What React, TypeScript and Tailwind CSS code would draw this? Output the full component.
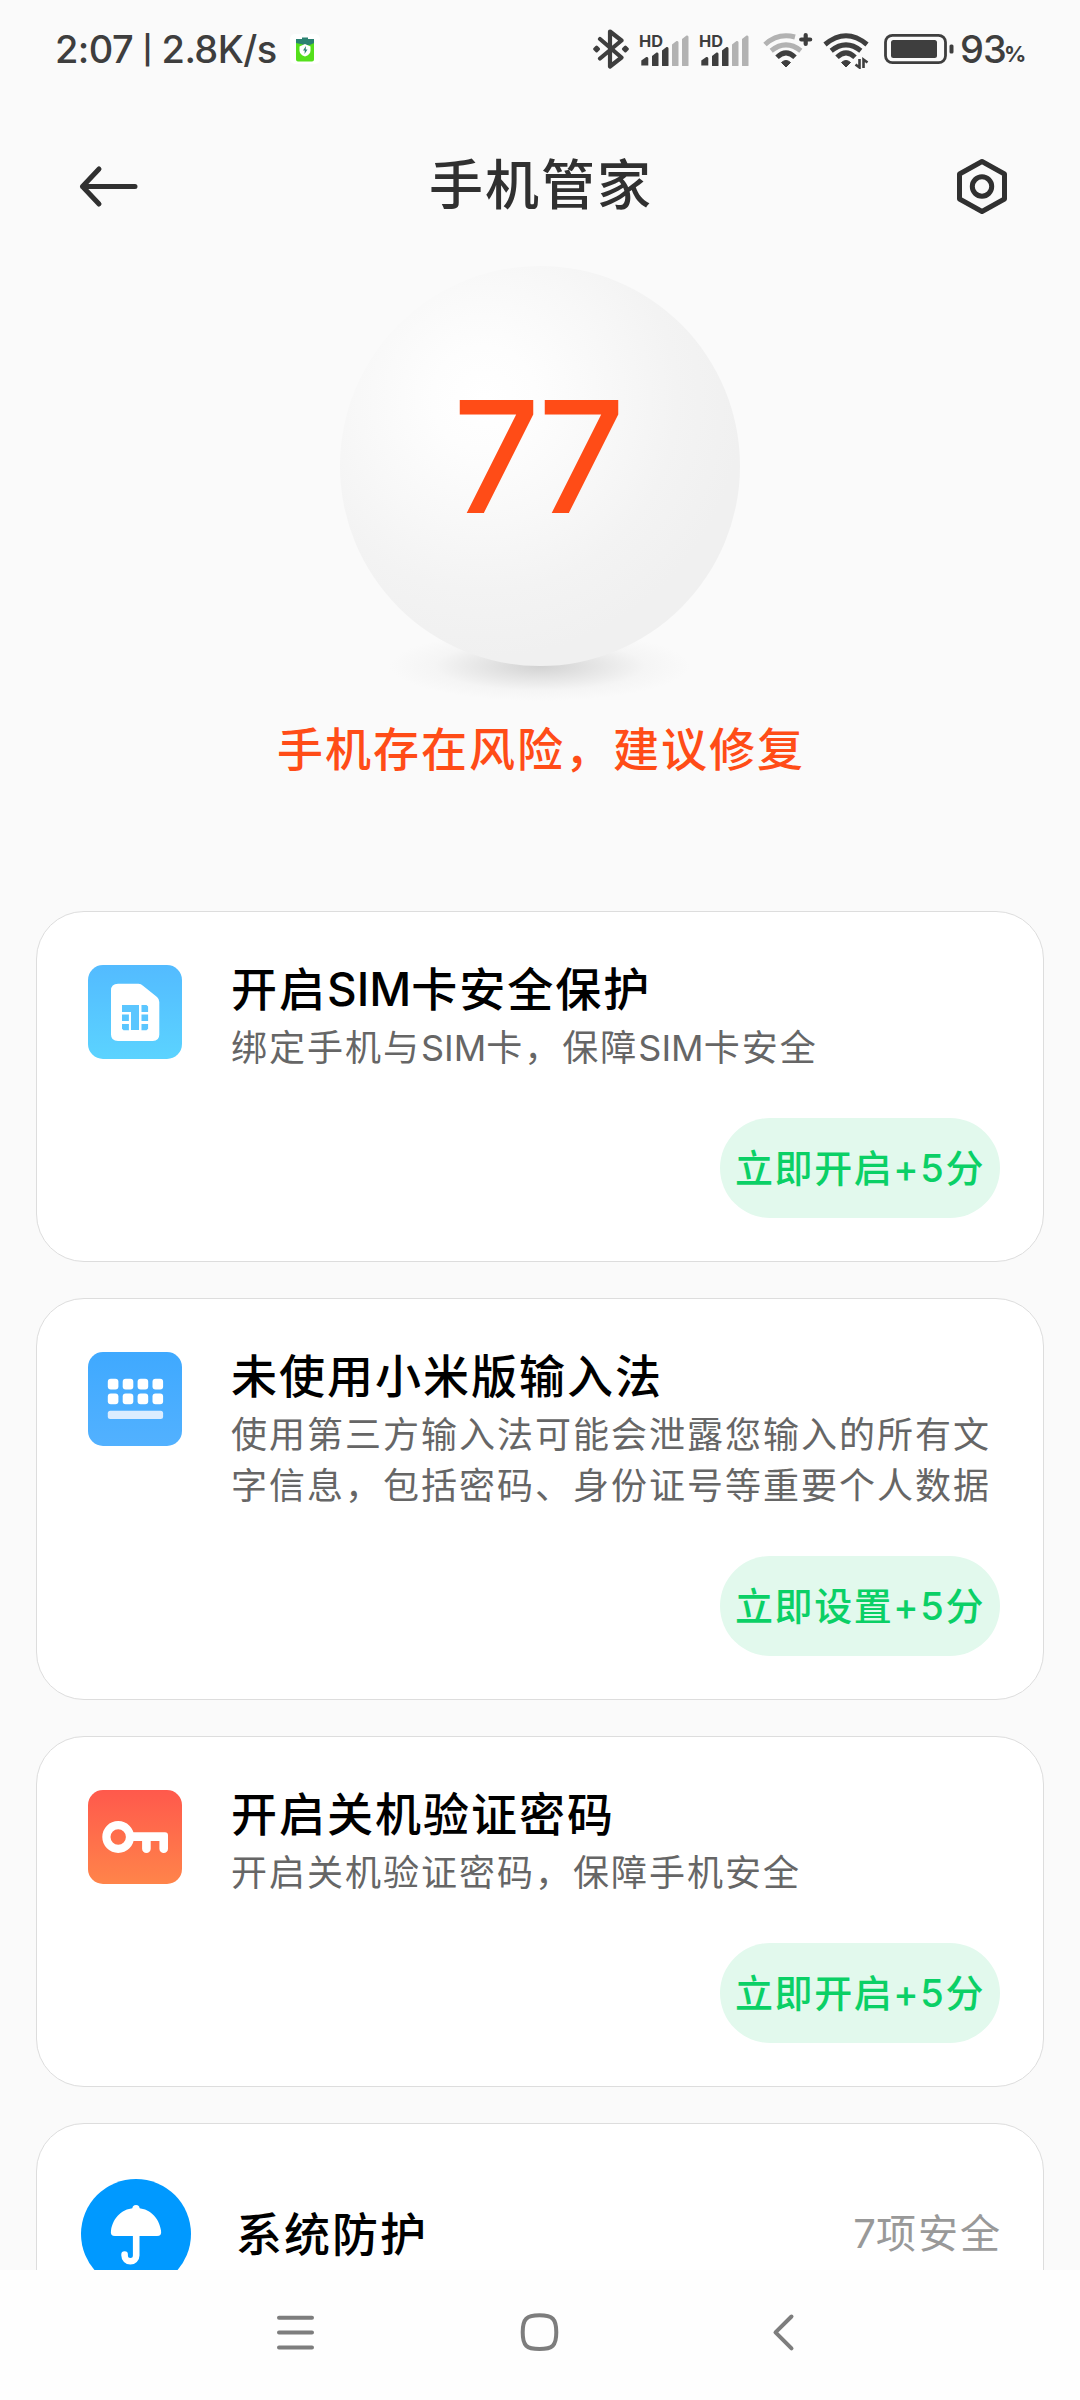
import type { ReactNode } from "react";

type Risk = {
  title: string;
  desc: string;
  action: string;
  icon: ReactNode;
};

// Latin runs and digits sit tighter than the Chinese glyphs around them
function Mixed({ text }: { text: string }) {
  return text.split(/([A-Z0-9]+)/).map((part, i) =>
    i % 2 ? (
      <span key={i} className="tracking-normal">
        {part}
      </span>
    ) : (
      part
    )
  );
}

function SimIcon() {
  return (
    <svg viewBox="0 0 94 94" className="h-[94px] w-[94px] shrink-0">
      <defs>
        <linearGradient id="sim" x1="0" y1="0" x2="0" y2="1">
          <stop offset="0" stopColor="#53bbff" />
          <stop offset="1" stopColor="#5bd3ff" />
        </linearGradient>
      </defs>
      <rect width="94" height="94" rx="15" fill="url(#sim)" />
      <path d="M30 18.7h20.5q2.5 0 4.500 2L69 32q2.300 2 2.300 5v32.500q0 6.500-6.500 6.500H30q-7 0-7-6.500V25.500q0-6.800 7-6.800z" fill="#fff" />
      <g fill="#5bc6ff">
        <path d="M34 40h17v25h-8V47h-9z" />
        <rect x="34" y="49.5" width="7" height="6.5" />
        <path d="M34 59h7v6.200h-5.500l-1.500-1.500z" />
        <path d="M53.500 40h5l1.600 1.500V47h-6.600z" />
        <rect x="53.5" y="49.5" width="6.6" height="6.5" />
        <path d="M53.500 59h6.600v4.700l-1.600 1.500h-5z" />
      </g>
      <path d="M41.900 47.500V65" stroke="#fff" strokeWidth="2" />
    </svg>
  );
}

function KeyboardIcon() {
  return (
    <svg viewBox="0 0 94 94" className="h-[94px] w-[94px] shrink-0">
      <defs>
        <linearGradient id="kbd" x1="0" y1="0" x2="0" y2="1">
          <stop offset="0" stopColor="#3fa9ff" />
          <stop offset="1" stopColor="#52b1ff" />
        </linearGradient>
      </defs>
      <rect width="94" height="94" rx="15" fill="url(#kbd)" />
      {[26.7, 41.5].map((y) =>
        [19.8, 34.7, 49.6, 64.5].map((x) => (
          <rect key={`${x}-${y}`} x={x} y={y} width="10.6" height="10.8" rx="3" fill="#fff" />
        ))
      )}
      <rect x="19.8" y="58.7" width="55.3" height="8.3" rx="2.5" fill="#dcedff" />
    </svg>
  );
}

function KeyIcon() {
  return (
    <svg viewBox="0 0 94 94" className="h-[94px] w-[94px] shrink-0">
      <defs>
        <linearGradient id="key" x1="0" y1="0" x2="0" y2="1">
          <stop offset="0" stopColor="#ff594c" />
          <stop offset="1" stopColor="#ff844a" />
        </linearGradient>
      </defs>
      <rect width="94" height="94" rx="15" fill="url(#key)" />
      <circle cx="30.2" cy="47" r="11.8" fill="none" stroke="#fff" strokeWidth="8.2" />
      <path d="M43 42.300h34q3 0 3 3v13.500a4.300 4.300 0 0 1-8.600 0V51h-8.700v7.800a4.300 4.300 0 0 1-8.600 0V51H43z" fill="#fff" />
    </svg>
  );
}

function UmbrellaIcon() {
  return (
    <svg viewBox="0 0 110 110" className="h-[110px] w-[110px] shrink-0">
      <circle cx="55" cy="55" r="55" fill="#0099ff" />
      <circle cx="55" cy="29.5" r="3.6" fill="#fff" />
      <path d="M34 57q-5 0-4-5.500C32 38 42 29 55 29s23 9 25 22.500q1 5.500-4 5.500z" fill="#fff" />
      <path d="M55.200 56v20.500a5.700 5.700 0 0 1-11.600 0v-1" fill="none" stroke="#fff" strokeWidth="6.6" strokeLinecap="round" />
    </svg>
  );
}

function Signal() {
  return (
    <svg viewBox="0 0 52 40" className="h-[40px] w-[52px]">
      <text x="0" y="17.5" fontSize="16" fontWeight="700" fill="#3e3e3e" textLength="24" lengthAdjust="spacingAndGlyphs">HD</text>
      <g fill="#3e3e3e">
        <path d="M2.300 31.500l5-3.500q2-.5 2 1.500v7h-7z" />
        <path d="M13 27l4.500-3.500q2-.5 2 1.500v11.500q0 .5-.5.500H13.500q-.5 0-.5-.5z" />
        <path d="M23 21.500l4.500-3.500q2-.5 2 1.500v17q0 .5-.5.500H23.500q-.5 0-.5-.5z" />
      </g>
      <g fill="#b2b2b2">
        <path d="M33 15.500l4.500-3.500q2-.5 2 1.500v23q0 .5-.5.500H33.500q-.5 0-.5-.5z" />
        <path d="M43 10l4.500-3.500q2-.5 2 1.500v28.500q0 .5-.5.500H43.500q-.5 0-.5-.5z" />
      </g>
    </svg>
  );
}

function Wifi({ outer, plus }: { outer: string; plus?: boolean }) {
  return (
    <svg viewBox="0 0 50 40" className="h-[40px] w-[50px]" fill="none" strokeWidth="5">
      <path d={plus ? "M2 15.500Q15 3.500 32 8" : "M2 15.500Q23 -2 44 15.500"} stroke={outer} />
      <path d="M8.200 21.700Q23 10 37.800 21.700" stroke={outer} />
      <path d="M14 28.200Q23 19.500 32 28.200" stroke="#3e3e3e" />
      <path d="M18.500 33.500q4.500-4 9 0L23 38z" fill="#3e3e3e" stroke="#3e3e3e" strokeWidth="1" strokeLinejoin="round" />
      {plus ? (
        <path d="M42.700 6v9M38.200 10.500h9" stroke="#3e3e3e" strokeWidth="4.2" strokeLinecap="round" />
      ) : (
        <path d="M36.500 30v8.500l-4-3M40.500 39v-8.500l4 3" stroke="#3e3e3e" strokeWidth="2.6" />
      )}
    </svg>
  );
}

function StatusBar() {
  return (
    <div className="flex h-[98px] items-center justify-between px-[55px] text-[#3e3e3e]">
      <div className="flex items-center">
        <span className="w-[235px] text-[38px] font-medium tracking-[-0.6px] whitespace-nowrap">
          2:07 <span className="align-[3px] text-[28px] font-semibold">|</span> 2.8K/s
        </span>
        <svg viewBox="0 0 30 30" className="h-[30px] w-[30px]">
          <rect width="30" height="30" rx="5" fill="#fff" />
          <path d="M6 5h6V3.500h6V5h6v8H6z" fill="#2b8272" />
          <path d="M6 9q5 1 9 2t9-2v16.500q0 2-2 2H8q-2 0-2-2z" fill="#55e01c" />
          <path d="M15 10l5.500 2.500v4q0 4-5.500 6-5.500-2-5.500-6v-4z" fill="#fff" />
          <path d="M16 12l-3 4.500h1.800L14.500 20l3-4.500h-1.800z" fill="#2b8272" />
        </svg>
      </div>
      <div className="flex items-center">
        <svg viewBox="0 0 38 40" className="mr-[9px] h-[40px] w-[38px]" fill="none" stroke="#3e3e3e" strokeWidth="4.2" strokeLinejoin="round" strokeLinecap="round">
          <path d="M8 10l21.500 18.500L18 37.500V2.500L29.500 11.500 8 29.500" />
          <path d="M4.600 18l2 2-2 2-2-2zM33.400 18l2 2-2 2-2-2z" fill="#3e3e3e" strokeWidth="3" />
        </svg>
        <div className="mr-2">
          <Signal />
        </div>
        <div className="mr-[12px]">
          <Signal />
        </div>
        <div className="mr-[10px]">
          <Wifi outer="#b2b2b2" plus />
        </div>
        <div className="mr-[11px]">
          <Wifi outer="#3e3e3e" />
        </div>
        <svg viewBox="0 0 70 32" className="h-[32px] w-[70px]">
          <rect x="1.5" y="2.3" width="60" height="27.4" rx="7" fill="none" stroke="#3e3e3e" strokeWidth="2.8" />
          <rect x="7" y="7" width="46" height="18" rx="2.5" fill="#3e3e3e" />
          <rect x="65.5" y="11.5" width="4" height="9" rx="1.5" fill="#3e3e3e" />
        </svg>
        <span className="ml-[6px] w-[44px] text-[38px] font-medium tracking-[-1px]">93</span>
        <span className="mt-[10px] w-[21px] text-[22px] font-bold">%</span>
      </div>
    </div>
  );
}

function RiskCard({ title, desc, action, icon }: Risk) {
  return (
    <section className="rounded-[48px] border border-[#dddddd] bg-white pt-[53px] pr-[43px] pb-[43px] pl-[51px]">
      <div className="flex gap-[49px]">
        {icon}
        <div className="-mt-1.5">
          <h2 className="text-[46px] leading-[60px] font-medium tracking-[2px] whitespace-nowrap text-black">
            <Mixed text={title} />
          </h2>
          <p className="mt-1 w-[780px] text-[36px] leading-[51px] tracking-[2px] text-[#666666]">
            <Mixed text={desc} />
          </p>
        </div>
      </div>
      <div className="mt-11 flex justify-end">
        <button className="h-[100px] w-[280px] rounded-full bg-[#e2f9ed] text-[38px] font-medium tracking-[1.6px] whitespace-nowrap text-[#0bd066]">
          {action}
        </button>
      </div>
    </section>
  );
}

const risks: Risk[] = [
  { title: "开启SIM卡安全保护", desc: "绑定手机与SIM卡，保障SIM卡安全", action: "立即开启+5分", icon: <SimIcon /> },
  {
    title: "未使用小米版输入法",
    desc: "使用第三方输入法可能会泄露您输入的所有文字信息，包括密码、身份证号等重要个人数据",
    action: "立即设置+5分",
    icon: <KeyboardIcon />,
  },
  { title: "开启关机验证密码", desc: "开启关机验证密码，保障手机安全", action: "立即开启+5分", icon: <KeyIcon /> },
];

export default function App() {
  return (
    <div lang="zh-CN" className="flex h-[2400px] w-[1080px] flex-col overflow-hidden bg-[#fafafa] font-['Inter','Noto_Sans_CJK_SC',sans-serif]">
      <StatusBar />

      <header className="flex h-[168px] items-start justify-between px-[72px] pt-[47px]">
        <svg viewBox="0 0 80 80" className="h-[80px] w-[80px]" fill="none" stroke="#303030" strokeWidth="5" strokeLinecap="round" strokeLinejoin="round">
          <path d="M27 24L10.500 41.500 27 59M10.500 41.500H63" />
        </svg>
        <h1 className="pl-[2px] text-[54px] leading-[82px] font-medium tracking-[2px] text-[#303030]">手机管家</h1>
        <svg viewBox="0 0 80 80" className="h-[80px] w-[80px]" fill="none" stroke="#303030" strokeWidth="5" strokeLinejoin="round">
          <path d="M54 16.500L76.500 29v25L54 66.500 31.500 54V29z" />
          <circle cx="54" cy="41.5" r="9.7" />
        </svg>
      </header>

      <div className="flex flex-col items-center">
        <div className="relative flex h-[400px] w-[400px] justify-center">
          <div className="absolute top-[365px] left-[50px] h-[70px] w-[300px] bg-[radial-gradient(closest-side,#d2d2d2,#e4e4e4_35%,#f5f5f5_70%,#fafafa)]" />
          <div className="relative flex h-[400px] w-[400px] justify-center rounded-full bg-[radial-gradient(circle_at_36%_33%,#ffffff_0%,#fdfdfd_14%,#f8f8f8_34%,#f3f3f3_52%,#f0f0f0_70%,#f0f0f0_100%)]">
            <span className="mt-[111px] -ml-[6px] text-[152px] leading-[160px] font-normal tracking-[-4px] text-[#ff4c17] [-webkit-text-stroke:2px_#ff4c17]">77</span>
          </div>
        </div>
        <p className="mt-[48px] pl-[2px] text-[46px] leading-[70px] font-medium tracking-[2px] text-[#ff4c17]">手机存在风险，建议修复</p>
      </div>

      <main className="mt-[127px] flex h-[1359px] shrink-0 flex-col gap-9 overflow-hidden px-9">
        {risks.map((risk) => (
          <RiskCard key={risk.title} {...risk} />
        ))}
        <section className="flex h-[222px] shrink-0 items-center rounded-[48px] border border-[#dddddd] bg-white pr-[41px] pl-11">
          <UmbrellaIcon />
          <h2 className="ml-[45px] flex-1 text-[46px] font-medium tracking-[2px] text-black">系统防护</h2>
          <span className="text-[40px] tracking-[2px] text-[#999999]">
            <Mixed text="7项安全" />
          </span>
        </section>
      </main>

      <nav className="h-[130px] shrink-0 bg-[#fefefe]">
        <svg viewBox="0 0 1080 130" className="h-[130px] w-[1080px]" fill="none" stroke="#7d7d7d" strokeWidth="4" strokeLinecap="round" strokeLinejoin="round">
          <path d="M279 47.700h33M279 62.500h33M279 77.500h33" />
          <path d="M539.500 45.300c13 0 16.800 3.500 16.800 17s-3.800 16.700-16.800 16.700-16.800-3.200-16.800-16.700 3.800-17 16.800-17z" />
          <path d="M791.500 46.500L775.500 62.300l16 16" />
        </svg>
      </nav>
    </div>
  );
}
